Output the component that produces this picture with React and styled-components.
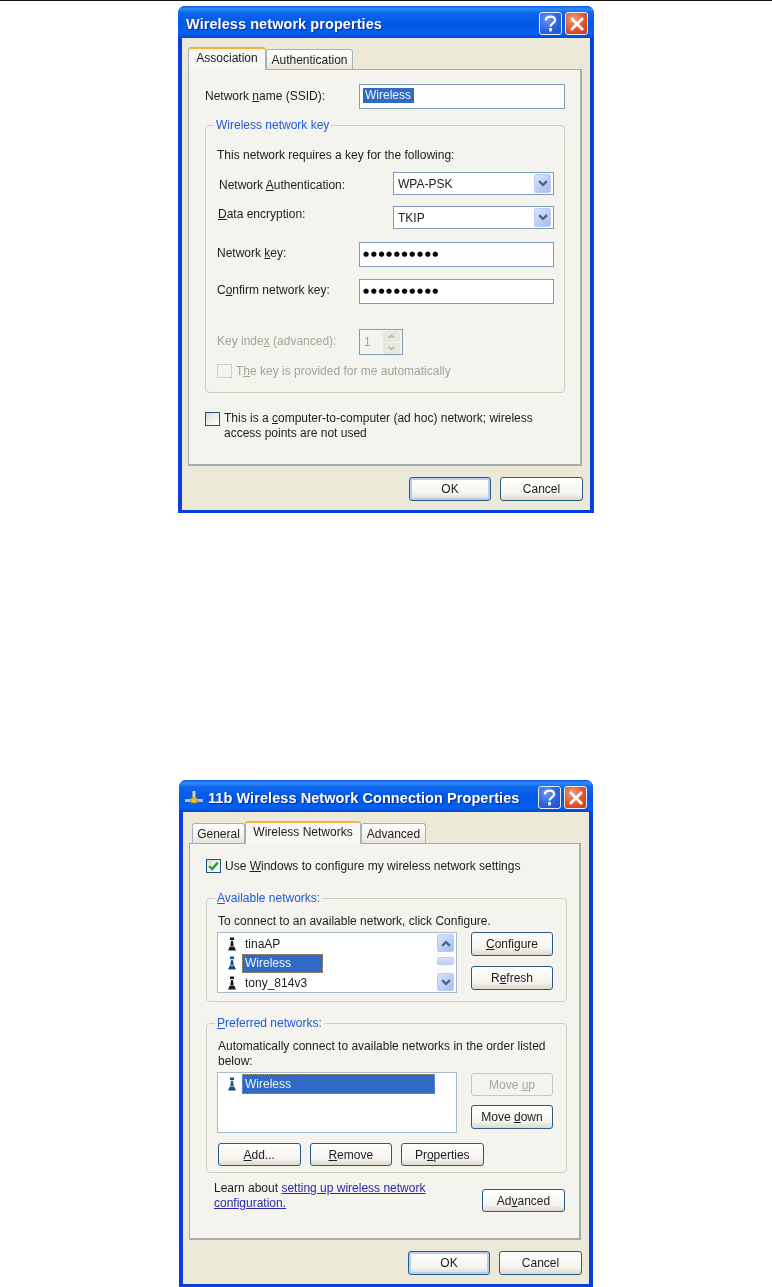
import React from 'react';
import styled, { createGlobalStyle, css } from 'styled-components';

const GlobalStyle = createGlobalStyle`
  html, body {
    margin: 0;
    padding: 0;
    background: #fff;
  }
  body {
    font-family: "Liberation Sans", Arial, sans-serif;
    font-size: 12px;
    color: #1c1c1c;
  }
`;

const Page = styled.div`
  width: 772px;
  height: 1287px;
  overflow: hidden;
  background: #fff;
`;

const Rule = styled.div`
  height: 1px;
  background: #111;
`;

const Dialog = styled.section`
  box-sizing: border-box;
  width: ${({ $width }) => $width}px;
  height: 507px;
  margin-left: ${({ $left }) => $left}px;
  margin-top: ${({ $top }) => $top}px;
  display: flex;
  flex-direction: column;
  background: #0a3fdc;
  padding: 0 4px 3px;
  border-radius: 7px 7px 0 0;
  filter: blur(0.4px);
`;

const TitleBar = styled.header`
  box-sizing: border-box;
  flex: none;
  height: 32px;
  margin: 0 -4px;
  padding: 3px 6px 0 8px;
  display: flex;
  align-items: center;
  gap: 3px;
  border-radius: 7px 7px 0 0;
  background: linear-gradient(180deg, #0a5ae2 0%, #2f8bf8 9%, #0f66ec 22%, #0257e6 55%, #0360f0 85%, #0249cf 100%);
`;

const TitleIcon = styled.span`
  display: flex;
  margin-left: -2px;
`;

const TitleText = styled.h1`
  flex: 1;
  margin: 0 0 0 ${({ $indent }) => $indent || 0}px;
  font-family: "Liberation Sans", Arial, sans-serif;
  font-size: 14.5px;
  font-weight: 700;
  letter-spacing: 0.07px;
  color: #fff;
  text-shadow: 1px 1px 1px #0a2a90;
  white-space: nowrap;
`;

const CaptionButton = styled.div`
  box-sizing: border-box;
  flex: none;
  width: 23px;
  height: 23px;
  display: flex;
  align-items: center;
  justify-content: center;
  border: 1px solid #e8eefc;
  border-radius: 3px;
  background: ${({ $close }) =>
    $close
      ? 'radial-gradient(circle at 35% 30%, #f0a080 0%, #e2592f 50%, #c43a12 100%)'
      : 'radial-gradient(circle at 35% 30%, #6d97f2 0%, #2c62e0 55%, #2350ce 100%)'};
`;

const Client = styled.div`
  flex: 1;
  min-height: 0;
  display: flex;
  flex-direction: column;
  padding: 10px 8px 0 6px;
  background: #ece9d8;
`;

const TabStrip = styled.div`
  height: 22px;
  display: flex;
  align-items: flex-end;
  padding-left: ${({ $indent }) => $indent || 0}px;
  position: relative;
  z-index: 1;
  margin-bottom: -1px;
`;

const Tab = styled.div`
  box-sizing: border-box;
  width: ${({ $width }) => $width}px;
  display: flex;
  justify-content: center;
  border: 1px solid #a6b2bb;
  border-bottom: 0;
  border-radius: 3px 3px 0 0;
  ${({ $active }) =>
    $active
      ? css`
          height: 23px;
          padding-top: 2px;
          background: #f8f7f3;
          border-top: 2px solid #f2b33d;
        `
      : css`
          height: 20px;
          padding-top: 3px;
          margin-bottom: 1px;
          background: linear-gradient(180deg, #fff 0%, #f4f3ee 60%, #e6e3d6 100%);
        `}
`;

const Panel = styled.div`
  box-sizing: border-box;
  height: 397px;
  border: 1px solid #a4adb0;
  border-right-width: 2px;
  border-bottom-width: 2px;
  background: #f4f3ee;
  padding: ${({ $padding }) => $padding};
`;

const Footer = styled.div`
  display: flex;
  justify-content: flex-end;
  gap: 9px;
  margin: 11px -1px 0 0;
`;

const Button = styled.button`
  box-sizing: border-box;
  width: ${({ $width }) => $width || 82}px;
  height: ${({ $height }) => $height || 24}px;
  margin: 0;
  margin-top: ${({ $mt }) => $mt || 0}px;
  padding: 0;
  font: inherit;
  color: ${({ disabled }) => (disabled ? '#a9a89b' : '#1c1c1c')};
  border: 1px solid ${({ disabled }) => (disabled ? '#c9c7ba' : '#2a5a86')};
  border-radius: 3px;
  background: ${({ disabled }) =>
    disabled ? '#f4f3ee' : 'linear-gradient(180deg, #fff 0%, #f5f4ee 70%, #dcd8ca 100%)'};
  ${({ $primary }) =>
    $primary &&
    css`
      box-shadow: inset 0 0 0 2px #b4cdf0;
    `}
`;

const Form = styled.div`
  display: grid;
  grid-template-columns: ${({ $columns }) => $columns};
  height: ${({ $height }) => $height}px;
  margin-top: ${({ $mt }) => $mt || 0}px;
  align-items: center;
`;

const Label = styled.label`
  color: ${({ $disabled }) => ($disabled ? '#a5a497' : 'inherit')};
  padding-left: ${({ $indent }) => $indent || 0}px;
  padding-bottom: ${({ $raise }) => $raise || 0}px;
  padding-top: ${({ $drop }) => $drop || 0}px;
  white-space: nowrap;
`;

const Input = styled.div`
  box-sizing: border-box;
  height: 25px;
  display: flex;
  align-items: center;
  padding: 0 0 ${({ $raise }) => $raise || 0}px 3px;
  border: 1px solid #7f9db9;
  background: #fff;
`;

const Selected = styled.span`
  padding: 0 3px 1px 2px;
  background: #316ac5;
  color: #f0f4fb;
  line-height: 14px;
`;

const Dots = styled.span`
  font-family: "DejaVu Sans", sans-serif;
  font-size: 7px;
  letter-spacing: 1.6px;
  color: #000;
`;

const Group = styled.div`
  box-sizing: border-box;
  position: relative;
  width: ${({ $width }) => $width}px;
  height: ${({ $height }) => $height}px;
  margin-top: ${({ $mt }) => $mt}px;
  border: 1px solid #d0d0bf;
  border-radius: 4px;
  padding: ${({ $padding }) => $padding};
`;

const Legend = styled.span`
  position: absolute;
  top: -8px;
  left: 8px;
  padding: 0 2px;
  background: #f4f3ee;
  color: #1f5bd8;
  line-height: 14px;
  white-space: nowrap;
`;

const Text = styled.div`
  line-height: ${({ $line }) => $line || 14}px;
  margin-left: ${({ $ml }) => $ml || 0}px;
`;

const Select = styled.div`
  box-sizing: border-box;
  height: 23px;
  display: flex;
  align-items: center;
  justify-content: space-between;
  padding: 0 2px 0 4px;
  border: 1px solid #7f9db9;
  background: #fff;
`;

const ArrowButton = styled.div`
  box-sizing: border-box;
  flex: none;
  width: 17px;
  height: ${({ $height }) => $height || 18}px;
  display: flex;
  align-items: center;
  justify-content: center;
  border-radius: 2px;
  border: 1px solid #b9cdf4;
  background: linear-gradient(135deg, #dbe5fb 0%, #bccdf7 55%, #a6bdf0 100%);
`;

const Spin = styled.div`
  box-sizing: border-box;
  width: 44px;
  height: 26px;
  display: flex;
  align-items: center;
  justify-content: space-between;
  padding: 1px 2px 1px 4px;
  border: 1px solid #7f9db9;
  color: #a5a497;
  background: #f4f3ee;
`;

const SpinButtons = styled.div`
  width: 17px;
  display: flex;
  flex-direction: column;
  gap: 1px;
`;

const SpinButton = styled.div`
  height: 11px;
  display: flex;
  align-items: center;
  justify-content: center;
  background: #e8e7de;
  border-radius: 2px;
`;

const CheckRow = styled.div`
  display: flex;
  align-items: flex-start;
  gap: 4px;
  margin-top: ${({ $mt }) => $mt || 0}px;
  color: ${({ $disabled }) => ($disabled ? '#a5a497' : 'inherit')};
  line-height: ${({ $line }) => $line || 14}px;
`;

const CheckBox = styled.span`
  box-sizing: border-box;
  flex: none;
  width: 15px;
  height: 14px;
  margin-top: ${({ $mt }) => $mt || 0}px;
  display: flex;
  align-items: center;
  justify-content: center;
  border: 1px solid ${({ $disabled }) => ($disabled ? '#cfcec1' : '#1c5180')};
  background: ${({ $disabled }) =>
    $disabled ? '#f4f3ee' : 'linear-gradient(135deg, #dcdcd6 0%, #f2f2ee 60%, #fff 100%)'};
`;

const ListRow = styled.div`
  display: flex;
  align-items: flex-start;
  margin-top: 4px;
`;

const List = styled.div`
  box-sizing: border-box;
  flex: none;
  width: 240px;
  height: 61px;
  display: flex;
  border: 1px solid #a6bad0;
  background: #fff;
  padding: 1px 0;
`;

const ListItems = styled.div`
  flex: 1;
`;

const ListItem = styled.div`
  height: 19.5px;
  display: flex;
  align-items: center;
`;

const ItemIcon = styled.span`
  flex: none;
  width: 24px;
  display: flex;
  justify-content: flex-end;
  padding-right: 6px;
  box-sizing: border-box;
`;

const ItemLabel = styled.span`
  box-sizing: border-box;
  width: ${({ $width }) => $width || 'auto'};
  height: 100%;
  display: flex;
  align-items: center;
  padding: 0 3px;
  ${({ $selected }) =>
    $selected &&
    css`
      background: #316ac5;
      color: #eef3fb;
      outline: 1px dotted rgba(220, 170, 90, 0.7);
      outline-offset: -1px;
    `}
`;

const Scrollbar = styled.div`
  flex: none;
  width: 17px;
  margin-right: 2px;
  display: flex;
  flex-direction: column;
  align-items: center;
  background: #fcfcf9;
`;

const Thumb = styled.div`
  box-sizing: border-box;
  width: 17px;
  height: 8px;
  margin: 5px 0 8px;
  border-radius: 2px;
  border: 1px solid #b9cdf4;
  background: linear-gradient(180deg, #d8e3fb, #bdcff7);
`;

const SideButtons = styled.div`
  display: flex;
  flex-direction: column;
  margin-left: 14px;
`;

const ButtonRow = styled.div`
  display: flex;
  gap: 9px;
  margin: 10px 0 0 1px;
`;

const LearnRow = styled.div`
  width: 359px;
  display: flex;
  justify-content: space-between;
  align-items: flex-start;
  margin-top: 8px;
`;

const Learn = styled.div`
  padding-left: 8px;
  line-height: 14.5px;
`;

const Link = styled.a`
  color: #2a2aa8;
  text-decoration: underline;
`;

const HelpIcon = () => (
  <svg width="15" height="17" viewBox="0 0 15 17" fill="none" stroke="#fff" strokeWidth="2.2">
    <path d="M2.8 5.4C3 2.8 5 1.6 7.5 1.6c2.7 0 4.6 1.4 4.6 3.6 0 3.2-4.6 3.2-4.6 6.4" />
    <path d="M7.5 13v3.4" strokeWidth="2.6" />
  </svg>
);

const CloseIcon = () => (
  <svg width="14" height="14" viewBox="0 0 14 14" stroke="#fff" strokeWidth="2.8" strokeLinecap="square">
    <path d="M2 2l10 10M12 2L2 12" />
  </svg>
);

const ConnectionIcon = () => (
  <svg width="18" height="16" viewBox="0 0 18 16">
    <path d="M0 10.5h18" stroke="#b9bdc4" strokeWidth="3" />
    <path d="M9 1v7" stroke="#d9d39a" strokeWidth="3" />
    <rect x="6" y="8" width="6" height="5" fill="#f0c020" stroke="#a8801a" strokeWidth="0.8" />
  </svg>
);

const Chevron = ({ up, color = '#4d6185', size = 10 }) => (
  <svg width={size} height={size * 0.7} viewBox="0 0 9 6.3" fill="none" stroke={color} strokeWidth="2">
    <path d={up ? 'M1 5.3l3.5-3.5L8 5.3' : 'M1 1l3.5 3.5L8 1'} />
  </svg>
);

const Tick = () => (
  <svg width="11" height="10" viewBox="0 0 11 10" fill="none" stroke="#22a52c" strokeWidth="2.4">
    <path d="M1.2 5l3 3L9.8 1.6" />
  </svg>
);

const Antenna = ({ color = '#1a1a1a' }) => (
  <svg width="8" height="14" viewBox="0 0 8 14" fill={color}>
    <rect x="2" y="0.5" width="4" height="2.6" />
    <path d="M3 4h2l0.6 5H2.4z" />
    <path d="M1.8 9.5h4.4L8 13.5H0z" />
  </svg>
);

const NetworkItem = ({ name, selected, width }) => (
  <ListItem>
    <ItemIcon>
      <Antenna color={selected ? '#1c4f86' : '#1a1a1a'} />
    </ItemIcon>
    <ItemLabel $selected={selected} $width={width}>
      {name}
    </ItemLabel>
  </ListItem>
);

const Caption = ({ title, icon }) => (
  <TitleBar>
    {icon && <TitleIcon>{icon}</TitleIcon>}
    <TitleText $indent={icon ? 2 : 0}>{title}</TitleText>
    <CaptionButton>
      <HelpIcon />
    </CaptionButton>
    <CaptionButton $close>
      <CloseIcon />
    </CaptionButton>
  </TitleBar>
);

const DialogFooter = () => (
  <Footer>
    <Button $primary>OK</Button>
    <Button $width={83}>Cancel</Button>
  </Footer>
);

const PropertiesDialog = () => (
  <Dialog $left={178} $top={5} $width={416}>
    <Caption title="Wireless network properties" />
    <Client>
      <TabStrip>
        <Tab $active $width={78}>Association</Tab>
        <Tab $width={87}>Authentication</Tab>
      </TabStrip>
      <Panel $padding="14px 0 0 16px">
        <Form $columns="154px 206px" $height={25}>
          <Label $raise={2}>Network <u>n</u>ame (SSID):</Label>
          <Input $raise={3}><Selected>Wireless</Selected></Input>
        </Form>
        <Group $width={360} $height={268} $mt={16} $padding="22px 0 0 11px">
          <Legend>Wireless network key</Legend>
          <Text>This network requires a key for the following:</Text>
          <Form $columns="176px 161px" $height={23} $mt={10}>
            <Label $indent={2} $drop={3}>Network <u>A</u>uthentication:</Label>
            <Select>WPA-PSK<ArrowButton $height={19}><Chevron /></ArrowButton></Select>
          </Form>
          <Form $columns="176px 161px" $height={23} $mt={11}>
            <Label $indent={1} $raise={8}><u>D</u>ata encryption:</Label>
            <Select>TKIP<ArrowButton $height={19}><Chevron /></ArrowButton></Select>
          </Form>
          <Form $columns="142px 195px" $height={25} $mt={13}>
            <Label $raise={3}>Network <u>k</u>ey:</Label>
            <Input $raise={2}><Dots>●●●●●●●●●●</Dots></Input>
          </Form>
          <Form $columns="142px 195px" $height={25} $mt={12}>
            <Label $raise={3}>C<u>o</u>nfirm network key:</Label>
            <Input $raise={2}><Dots>●●●●●●●●●●</Dots></Input>
          </Form>
          <Form $columns="142px 44px" $height={26} $mt={25}>
            <Label $disabled $raise={2}>Key inde<u>x</u> (advanced):</Label>
            <Spin>
              1
              <SpinButtons>
                <SpinButton><Chevron up color="#b8b7ab" size={7} /></SpinButton>
                <SpinButton><Chevron color="#b8b7ab" size={7} /></SpinButton>
              </SpinButtons>
            </Spin>
          </Form>
          <CheckRow $disabled $mt={9}>
            <CheckBox $disabled />
            <span>T<u>h</u>e key is provided for me automatically</span>
          </CheckRow>
        </Group>
        <CheckRow $mt={18} $line={15}>
          <CheckBox $mt={1} />
          <span>
            This is a <u>c</u>omputer-to-computer (ad hoc) network; wireless
            <br />
            access points are not used
          </span>
        </CheckRow>
      </Panel>
      <DialogFooter />
    </Client>
  </Dialog>
);

const ConnectionDialog = () => (
  <Dialog $left={179} $top={267} $width={414}>
    <Caption title="11b Wireless Network Connection Properties" icon={<ConnectionIcon />} />
    <Client>
      <TabStrip $indent={3}>
        <Tab $width={53}>General</Tab>
        <Tab $active $width={116}>Wireless Networks</Tab>
        <Tab $width={65}>Advanced</Tab>
      </TabStrip>
      <Panel $padding="15px 0 0 16px">
        <CheckRow>
          <CheckBox><Tick /></CheckBox>
          <span>Use <u>W</u>indows to configure my wireless network settings</span>
        </CheckRow>
        <Group $width={361} $height={104} $mt={25} $padding="15px 0 0 10px">
          <Legend><u>A</u>vailable networks:</Legend>
          <Text $ml={1}>To connect to an available network, click Configure.</Text>
          <ListRow>
            <List>
              <ListItems>
                <NetworkItem name="tinaAP" />
                <NetworkItem name="Wireless" selected width="81px" />
                <NetworkItem name="tony_814v3" />
              </ListItems>
              <Scrollbar>
                <ArrowButton><Chevron up /></ArrowButton>
                <Thumb />
                <ArrowButton><Chevron /></ArrowButton>
              </Scrollbar>
            </List>
            <SideButtons>
              <Button><u>C</u>onfigure</Button>
              <Button $mt={10}>R<u>e</u>fresh</Button>
            </SideButtons>
          </ListRow>
        </Group>
        <Group $width={361} $height={150} $mt={21} $padding="15px 0 0 10px">
          <Legend><u>P</u>referred networks:</Legend>
          <Text $ml={1} $line={14.5}>
            Automatically connect to available networks in the order listed
            <br />
            below:
          </Text>
          <ListRow>
            <List>
              <ListItems>
                <NetworkItem name="Wireless" selected width="193px" />
              </ListItems>
            </List>
            <SideButtons>
              <Button disabled $mt={1} $height={23}>Move <u>u</u>p</Button>
              <Button $mt={9}>Move <u>d</u>own</Button>
            </SideButtons>
          </ListRow>
          <ButtonRow>
            <Button $width={82.5} $height={23}><u>A</u>dd...</Button>
            <Button $width={82.5} $height={23}><u>R</u>emove</Button>
            <Button $width={82.5} $height={23}>Pr<u>o</u>perties</Button>
          </ButtonRow>
        </Group>
        <LearnRow>
          <Learn>
            Learn about <Link>setting up wireless network</Link>
            <br />
            <Link>configuration.</Link>
          </Learn>
          <Button $mt={8} $width={83} $height={23}>Ad<u>v</u>anced</Button>
        </LearnRow>
      </Panel>
      <DialogFooter />
    </Client>
  </Dialog>
);

const App = () => (
  <Page>
    <GlobalStyle />
    <Rule />
    <PropertiesDialog />
    <ConnectionDialog />
  </Page>
);

export default App;
